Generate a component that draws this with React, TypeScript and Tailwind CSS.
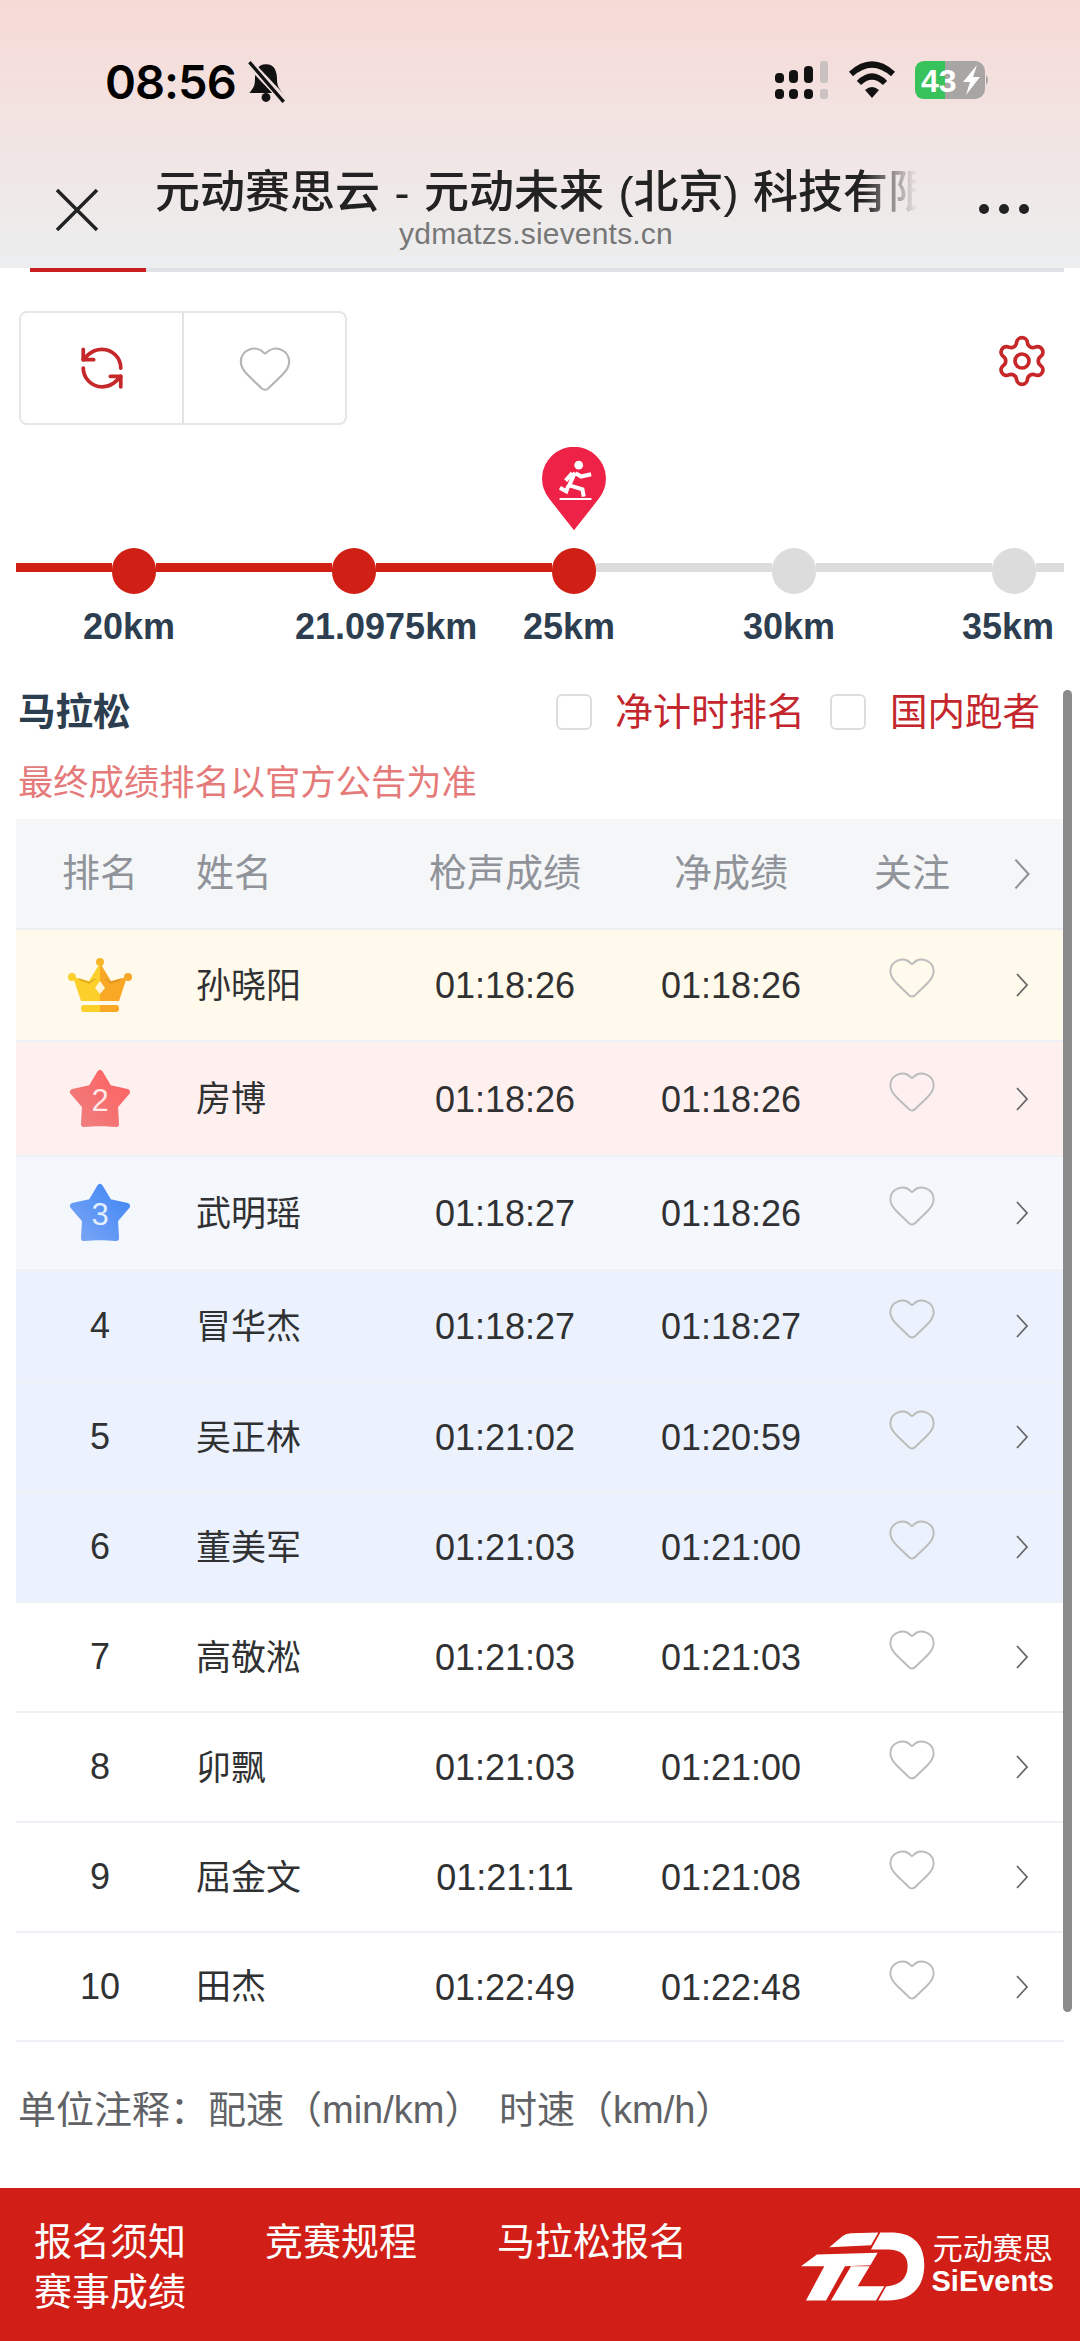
import { Heart, RefreshCcw, Settings } from 'lucide-react'

const points = [
  { label: '20km', done: true, pl: 'pl-[59px]' },
  { label: '21.0975km', done: true, pl: 'pl-[51px]' },
  { label: '25km', done: true, pl: 'pl-[59px]' },
  { label: '30km', done: false, pl: 'pl-[59px]' },
  { label: '35km', done: false, pl: 'pl-[58px]' },
]

const rows = [
  { rank: 1, name: '孙晓阳', gun: '01:18:26', net: '01:18:26', cls: 'h-[112px] bg-[#fffaeb]' },
  { rank: 2, name: '房博', gun: '01:18:26', net: '01:18:26', cls: 'h-[115px] bg-[#fff0f0]' },
  { rank: 3, name: '武明瑶', gun: '01:18:27', net: '01:18:26', cls: 'h-[114px] bg-[#f4f7fb]' },
  { rank: 4, name: '冒华杰', gun: '01:18:27', net: '01:18:27', cls: 'h-[112px] bg-[#ebf2fd]' },
  { rank: 5, name: '吴正林', gun: '01:21:02', net: '01:20:59', cls: 'h-[110px] bg-[#ebf2fd]' },
  { rank: 6, name: '董美军', gun: '01:21:03', net: '01:21:00', cls: 'h-[110px] bg-[#ebf2fd]' },
  { rank: 7, name: '高敬淞', gun: '01:21:03', net: '01:21:03', cls: 'h-[110px] bg-white' },
  { rank: 8, name: '卯飘', gun: '01:21:03', net: '01:21:00', cls: 'h-[110px] bg-white' },
  { rank: 9, name: '屈金文', gun: '01:21:11', net: '01:21:08', cls: 'h-[110px] bg-white' },
  { rank: 10, name: '田杰', gun: '01:22:49', net: '01:22:48', cls: 'h-[109px] bg-white' },
]

const gridCols = 'grid grid-cols-[168px_209px_224px_228px_134px_85px] items-center'

const Chevron = ({ big }: { big?: boolean }) => (
  <svg width={big ? 20 : 14} height={big ? 34 : 26} viewBox="0 0 14 26" fill="none">
    <path d="M2 2 L12 13 L2 24" stroke={big ? '#8f9297' : '#666'} strokeWidth={big ? 1.6 : 1.8} />
  </svg>
)

const Crown = () => (
  <svg width="66" height="56" viewBox="0 0 66 56">
    <defs>
      <linearGradient id="crown" x1="0" x2="1" y1="0" y2="0">
        <stop offset="0.5" stopColor="#fdcf2b" />
        <stop offset="0.5" stopColor="#f9a825" />
      </linearGradient>
    </defs>
    <circle cx="33" cy="5" r="4" fill="#f8b62b" />
    <circle cx="5" cy="20" r="4" fill="#fdcf2b" />
    <circle cx="61" cy="20" r="4" fill="#f9a825" />
    <path d="M33 6 L44 24 L60 20 L52 44 L14 44 L6 20 L22 24 Z" fill="url(#crown)" />
    <path d="M12 22 L22 26 L28 22 M54 22 L44 26 L38 22" stroke="#c98a1e" strokeWidth="1.5" fill="none" opacity="0.6" />
    <path d="M33 24 L38 31 L33 37 L28 31 Z" fill="#fff6d8" />
    <rect x="14" y="48" width="38" height="7" rx="3" fill="url(#crown)" />
  </svg>
)

const Star = ({ n, from, to, id }: { n: number; from: string; to: string; id: string }) => (
  <svg width="62" height="60" viewBox="0 0 62 60">
    <defs>
      <linearGradient id={id} x1="0" x2="1" y1="1" y2="0">
        <stop offset="0" stopColor={from} />
        <stop offset="1" stopColor={to} />
      </linearGradient>
    </defs>
    <path
      d="M31 4 L40 19 L58 23 L46 37 L47 55 L31 54 L15 55 L16 37 L4 23 L22 19 Z"
      fill={`url(#${id})`}
      stroke={`url(#${id})`}
      strokeWidth="6"
      strokeLinejoin="round"
    />
    <text x="31" y="42" textAnchor="middle" fontSize="31" fill="#fff" fillOpacity="0.85" fontFamily="Liberation Sans">{n}</text>
  </svg>
)

const Rank = ({ rank }: { rank: number }) => {
  if (rank === 1) return <Crown />
  if (rank === 2) return <Star n={2} from="#ee8080" to="#ff6060" id="s2" />
  if (rank === 3) return <Star n={3} from="#7ba6f5" to="#3f86f5" id="s3" />
  return <span>{rank}</span>
}

const StatusBar = () => (
  <div className="flex items-start justify-between pl-[105px] pr-[90px] pt-[60px]">
    <div className="flex items-center gap-[9px]">
      <span className="text-[47px] leading-[44px] font-semibold text-black font-['Inter',sans-serif] tracking-[-1px]">08:56</span>
      <svg width="42" height="42" viewBox="0 0 38 38">
        <path d="M19 3 C11 3 9 10 9 17 C9 23 7 25 4 29 L34 29 C31 25 29 23 29 17 C29 10 27 3 19 3 Z" fill="#111" />
        <circle cx="19" cy="33" r="4" fill="#111" />
        <path d="M4 2 L36 36" stroke="#eedfdd" strokeWidth="7" />
        <path d="M4 1 L35 37" stroke="#111" strokeWidth="3" />
      </svg>
    </div>
    <svg width="215" height="40" viewBox="0 0 215 40" className="mt-[1px]">
      <rect x="0" y="12" width="9" height="10" rx="4" fill="#111" />
      <rect x="14" y="9" width="9" height="13" rx="4" fill="#111" />
      <rect x="29" y="5" width="9" height="17" rx="4" fill="#111" />
      <rect x="45" y="0" width="8" height="22" rx="3" fill="#c9c2c1" />
      <rect x="0" y="28" width="9" height="10" rx="4" fill="#111" />
      <rect x="14" y="28" width="9" height="10" rx="4" fill="#111" />
      <rect x="29" y="28" width="9" height="10" rx="4" fill="#111" />
      <rect x="45" y="28" width="8" height="10" rx="3" fill="#c9c2c1" />
      <path d="M76 13 Q97 -6 118 13" stroke="#111" strokeWidth="6" fill="none" />
      <path d="M84 22 Q97 9 110 22" stroke="#111" strokeWidth="6" fill="none" />
      <path d="M90 29 Q97 23 104 29 L97 37 Z" fill="#111" />
      <rect x="140" y="0" width="70" height="38" rx="10" fill="#a8a5a5" />
      <path d="M150 0 L170 0 L170 38 L150 38 Q140 38 140 28 L140 10 Q140 0 150 0 Z" fill="#37c25c" />
      <path d="M211 14 Q215 19 211 24 Z" fill="#a8a5a5" />
      <text x="146" y="31" fontSize="32" fontWeight="700" fill="#fff" fontFamily="Liberation Sans">43</text>
      <path d="M202 4 L188 21 L195 21 L191 34 L205 16 L198 16 Z" fill="#fff" />
    </svg>
  </div>
)

const TitleBar = () => (
  <div className="flex items-start mt-[64px]">
    <svg width="44" height="44" viewBox="0 0 44 44" fill="none" className="ml-[55px] mt-[20px] shrink-0">
      <path d="M2 2 L42 42 M42 2 L2 42" stroke="#222" strokeWidth="3.5" />
    </svg>
    <div className="ml-[56px] w-[770px] shrink-0">
      <div className="whitespace-nowrap overflow-hidden text-[45px] leading-[50px] font-medium text-[#222] [word-spacing:2px] [mask-image:linear-gradient(to_right,black_92%,transparent_99%)]">
        元动赛思云 - 元动未来 (北京) 科技有限
      </div>
      <div className="text-center text-[30px] leading-[30px] text-[#777] mt-[1px] -ml-[8px] tracking-[0.2px]">ydmatzs.sievents.cn</div>
    </div>
    <div className="flex gap-[10px] ml-[54px] mt-[36px]">
      <span className="w-[10px] h-[10px] rounded-full bg-[#222]" />
      <span className="w-[10px] h-[10px] rounded-full bg-[#222]" />
      <span className="w-[10px] h-[10px] rounded-full bg-[#222]" />
    </div>
  </div>
)

const Pin = () => (
  <svg width="64" height="84" viewBox="128 50 190 250" className="ml-[542px] mt-[22px]">
    <path d="M223 298 L150 205 A95 95 0 1 1 296 205 Z" fill="#ee2247" />
    <circle cx="237" cy="104" r="13" fill="#fff" />
    <path d="M226 126 L207 168 M218 128 L198 150 M228 128 L244 138 L274 131 M212 165 L248 176 L252 198 M206 166 L200 182 L181 171" stroke="#fff" strokeWidth="12" fill="none" />
    <path d="M180 205 L275 205" stroke="#fff" strokeWidth="6" />
  </svg>
)

const Track = () => (
  <div className="flex items-center mt-[17px] ml-[16px] w-[1048px]">
    <div className="w-[96px] h-[9px] mb-[7px] bg-[#d01f14]" />
    <div className="w-[44px] h-[46px] rounded-full bg-[#d01f14]" />
    <div className="w-[176px] h-[9px] mb-[7px] bg-[#d01f14]" />
    <div className="w-[44px] h-[46px] rounded-full bg-[#d01f14]" />
    <div className="w-[176px] h-[9px] mb-[7px] bg-[#d01f14]" />
    <div className="w-[44px] h-[46px] rounded-full bg-[#d01f14]" />
    <div className="w-[176px] h-[9px] mb-[7px] bg-[#dcdcdc]" />
    <div className="w-[44px] h-[46px] rounded-full bg-[#dcdcdc]" />
    <div className="w-[176px] h-[9px] mb-[7px] bg-[#dcdcdc]" />
    <div className="w-[44px] h-[46px] rounded-full bg-[#dcdcdc]" />
    <div className="w-[28px] h-[9px] mb-[7px] bg-[#dcdcdc]" />
  </div>
)

const Logo = () => (
  <div className="flex items-start gap-[7px] mt-[16px]">
    <svg width="124" height="71" viewBox="120 30 372 212" className="mt-[-2px]">
      <g fill="#fff">
        <path d="M205 78 L246 44 Q256 36 270 36 L352 34 L330 72 Z" />
        <path d="M120 135 L168 100 L350 95 L328 132 L252 135 L195 238 L135 238 L190 135 Z" />
        <path d="M270 135 L326 135 L290 195 L370 195 L345 238 L210 238 Z" />
        <path d="M358 34 L400 34 Q490 40 490 135 Q485 238 378 238 L352 238 L375 196 Q438 190 440 135 Q440 88 385 85 L330 85 Z" />
      </g>
    </svg>
    <div className="text-white text-center">
      <div className="text-[30px] leading-[32px] whitespace-nowrap">元动赛思</div>
      <div className="text-[29px] leading-[32px] font-bold whitespace-nowrap">SiEvents</div>
    </div>
  </div>
)

export default function App() {
  return (
    <div className="relative h-[2341px] w-[1080px] flex flex-col overflow-hidden bg-white font-['Liberation_Sans','Noto_Sans_CJK_SC',sans-serif]">
      {/* browser chrome */}
      <div className="h-[268px] shrink-0 bg-gradient-to-b from-[#f6dad6] to-[#eceeef]">
        <StatusBar />
        <TitleBar />
      </div>
      <div className="flex h-[4px] shrink-0 mx-[30px] w-[1034px] bg-[#dfe3e8]">
        <div className="w-[116px] bg-[#c9201f]" />
      </div>

      <div className="flex items-start justify-between mt-[39px] pl-[19px] pr-[30px]">
        <div className="flex h-[114px] w-[328px] rounded-[8px] border-2 border-[#e6e6e6]">
          <div className="w-[163px] flex items-center justify-center border-r-2 border-[#e3e3e3]">
            <RefreshCcw size={50} strokeWidth={1.8} className="text-[#c6282a]" />
          </div>
          <div className="flex-1 flex items-center justify-center">
            <Heart size={58} strokeWidth={0.9} className="text-[#b5b5b5]" />
          </div>
        </div>
        <Settings size={56} strokeWidth={1.6} className="text-[#c6282a] mt-[22px]" />
      </div>

      <Pin />
      <Track />
      <div className="flex ml-[24px] mt-[13px] text-[36px] leading-[40px] font-bold text-[#2c3e50]">
        {points.map((p) => (
          <div key={p.label} className={`w-[220px] shrink-0 whitespace-nowrap ${p.pl}`}>{p.label}</div>
        ))}
      </div>

      <div className="flex items-center mt-[45px] pl-[18px] h-[40px] text-[38px]">
        <span className="font-bold text-[#2c3e50] w-[538px] text-[37.5px]">马拉松</span>
        <span className="w-[36px] h-[36px] rounded-[6px] border-2 border-[#dddddd]" />
        <span className="ml-[23px] text-[#c3262c] w-[215px] whitespace-nowrap">净计时排名</span>
        <span className="w-[36px] h-[36px] rounded-[6px] border-2 border-[#dddddd]" />
        <span className="ml-[24px] text-[#c3262c] whitespace-nowrap text-[37.5px]">国内跑者</span>
      </div>
      <div className="mt-[31px] pl-[18px] text-[35.3px] leading-[40px] text-[#e57a7a]">最终成绩排名以官方公告为准</div>

      {/* table */}
      <div className="mt-[16px] ml-[16px] w-[1048px] text-[36px]">
        <div className={`${gridCols} h-[111px] bg-[#f4f6f8] border-b-2 border-[#eceef2] text-[38px] text-[#909399]`}>
          <div className="text-center">排名</div>
          <div className="pl-[12px]">姓名</div>
          <div className="text-center">枪声成绩</div>
          <div className="text-center">净成绩</div>
          <div className="text-center">关注</div>
          <div className="flex justify-center"><Chevron big /></div>
        </div>
        {rows.map((r) => (
          <div key={r.rank} className={`${gridCols} ${r.cls} border-b-2 border-[#eef0f5] text-[#303133]`}>
            <div className="flex justify-center"><Rank rank={r.rank} /></div>
            <div className="pl-[12px] pt-[2px] text-[35px]">{r.name}</div>
            <div className="text-center pt-[2px]">{r.gun}</div>
            <div className="text-center pt-[2px]">{r.net}</div>
            <div className="flex justify-center pb-[16px]">
              <Heart size={52} strokeWidth={0.9} className="text-[#bcbcbc]" />
            </div>
            <div className="flex justify-center"><Chevron /></div>
          </div>
        ))}
      </div>

      <div className="mt-[43px] pl-[18px] text-[38px] leading-[50px] text-[#606266] whitespace-nowrap [word-spacing:6px]">单位注释：配速（min/km） 时速（km/h）</div>

      <div className="mt-auto h-[153px] bg-[#d11f17] flex justify-between pl-[34px] pr-[26px] pt-[29px] text-white">
        <div className="flex flex-wrap content-start w-[720px] text-[38px] leading-[50px]">
          <div className="w-[231px]">报名须知</div>
          <div className="w-[232px]">竞赛规程</div>
          <div className="w-[232px]">马拉松报名</div>
          <div className="w-[232px]">赛事成绩</div>
        </div>
        <Logo />
      </div>

      {/* scrollbar floats over the table */}
      <div className="absolute left-[1063px] top-[690px] w-[9px] h-[1322px] rounded-full bg-[#8a8a8a]" />
    </div>
  )
}
